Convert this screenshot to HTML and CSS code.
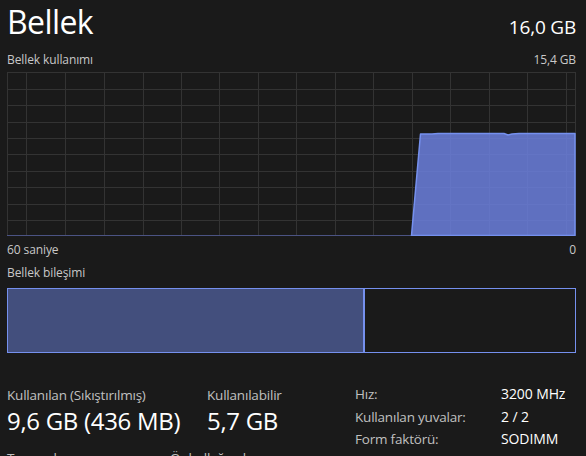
FILE: index.html
```
<!doctype html>
<html lang="tr">
<head>
	<meta charset="UTF-8">
	<title>Bellek</title>
	<link rel="stylesheet" href="styles.css">
</head>
<body>
	<div class="page">
		<div class="head">
			<div class="title">Bellek</div>
			<div class="total">16,0 GB</div>
		</div>
		<div class="cap-row top">
			<span>Bellek kullanımı</span>
			<span>15,4 GB</span>
		</div>
		<svg class="graph" width="569" height="164" viewBox="0 0 569 164">
			<g stroke="#333333" stroke-width="1">
				<line x1="19.5" y1="0" x2="19.5" y2="164"/>
				<line x1="58.5" y1="0" x2="58.5" y2="164"/>
				<line x1="97.5" y1="0" x2="97.5" y2="164"/>
				<line x1="136.5" y1="0" x2="136.5" y2="164"/>
				<line x1="174.5" y1="0" x2="174.5" y2="164"/>
				<line x1="212.5" y1="0" x2="212.5" y2="164"/>
				<line x1="251.5" y1="0" x2="251.5" y2="164"/>
				<line x1="289.5" y1="0" x2="289.5" y2="164"/>
				<line x1="328.5" y1="0" x2="328.5" y2="164"/>
				<line x1="366.5" y1="0" x2="366.5" y2="164"/>
				<line x1="405.5" y1="0" x2="405.5" y2="164"/>
				<line x1="443.5" y1="0" x2="443.5" y2="164"/>
				<line x1="482.5" y1="0" x2="482.5" y2="164"/>
				<line x1="520.5" y1="0" x2="520.5" y2="164"/>
				<line x1="559.5" y1="0" x2="559.5" y2="164"/>
				<line x1="0" y1="17.5" x2="569" y2="17.5"/>
				<line x1="0" y1="33.5" x2="569" y2="33.5"/>
				<line x1="0" y1="50.5" x2="569" y2="50.5"/>
				<line x1="0" y1="66.5" x2="569" y2="66.5"/>
				<line x1="0" y1="82.5" x2="569" y2="82.5"/>
				<line x1="0" y1="99.5" x2="569" y2="99.5"/>
				<line x1="0" y1="115.5" x2="569" y2="115.5"/>
				<line x1="0" y1="132.5" x2="569" y2="132.5"/>
				<line x1="0" y1="148.5" x2="569" y2="148.5"/>
				<rect x="0.5" y="0.5" width="568" height="163" fill="none"/>
			</g>
			<line x1="0" y1="163.5" x2="405" y2="163.5" stroke="#4b5383" stroke-width="1"/>
			<polygon points="404.5,163.5 413.5,62 425,62 431,61.5 440,61.5 497,61.5 501,63 505,62 512,61.5 568,61.5 568,163.5"
				fill="#6b7fdc" fill-opacity="0.86" stroke="#7590ee" stroke-width="1.5" stroke-linejoin="round"/>
		</svg>
		<div class="cap-row axis">
			<span>60 saniye</span>
			<span>0</span>
		</div>
		<div class="cap-row comp-title">
			<span>Bellek bileşimi</span>
		</div>
		<div class="comp">
			<div class="comp-used"></div>
		</div>
		<div class="stats">
			<div class="stats-left">
				<div class="stat-row">
					<div class="stat w200">
						<div class="label">Kullanılan (Sıkıştırılmış)</div>
						<div class="value">9,6 GB (436 MB)</div>
					</div>
					<div class="stat">
						<div class="label">Kullanılabilir</div>
						<div class="value">5,7 GB</div>
					</div>
				</div>
				<div class="stat-row">
					<div class="stat w163">
						<div class="label">Tamamlanan</div>
					</div>
					<div class="stat">
						<div class="label">Önbelleğe alınan</div>
					</div>
				</div>
			</div>
			<div class="stats-right">
				<div class="info"><span class="key">Hız:</span><span class="val">3200 MHz</span></div>
				<div class="info"><span class="key">Kullanılan yuvalar:</span><span class="val">2 / 2</span></div>
				<div class="info"><span class="key">Form faktörü:</span><span class="val">SODIMM</span></div>
			</div>
		</div>
	</div>
</body>
</html>
```
FILE: styles.css
```
html, body{
	margin:0;
	padding:0;
	height:100%;
	overflow:hidden;
	background:#1a1a1a;
}
body{
	font-family:"Segoe UI", "Open Sans", sans-serif;
	color:#fff;
}
.page{
	padding:0 10px 0 7px;
}
.head{
	display:flex;
	justify-content:space-between;
	align-items:baseline;
	height:44px;
}
.title{
	font-size:32px;
	line-height:44px;
	letter-spacing:-0.6px;
}
.total{
	font-size:19px;
	letter-spacing:-0.2px;
}
.cap-row{
	display:flex;
	justify-content:space-between;
	font-size:12px;
	line-height:16px;
	color:#c8c8c8;
	letter-spacing:-0.1px;
}
.cap-row.top{
	margin-top:8px;
}
.graph{
	display:block;
	margin-top:4px;
}
.cap-row.axis{
	margin-top:6px;
}
.cap-row.comp-title{
	margin-top:7px;
}
.comp{
	margin-top:7px;
	height:63px;
	border:1px solid #7590ee;
	display:flex;
}
.comp-used{
	width:355px;
	background:#434f7d;
	border-right:2px solid #7590ee;
}
.stats{
	display:flex;
	margin-top:32px;
}
.stats-left{
	width:348px;
}
.stat-row{
	display:flex;
	margin-bottom:11px;
}
.w200{
	width:200px;
}
.w163{
	width:163px;
}
.label{
	font-size:13.5px;
	line-height:20px;
	color:#c0c0c0;
	letter-spacing:-0.2px;
}
.value{
	font-size:24px;
	line-height:32px;
	letter-spacing:-0.3px;
}
.stats-right{
	margin-top:-2px;
}
.info{
	display:flex;
	font-size:13.5px;
	line-height:22.5px;
	letter-spacing:-0.2px;
}
.key{
	width:146px;
	color:#c0c0c0;
}
.val{
	color:#fff;
	font-size:14px;
	letter-spacing:-0.1px;
}
```
